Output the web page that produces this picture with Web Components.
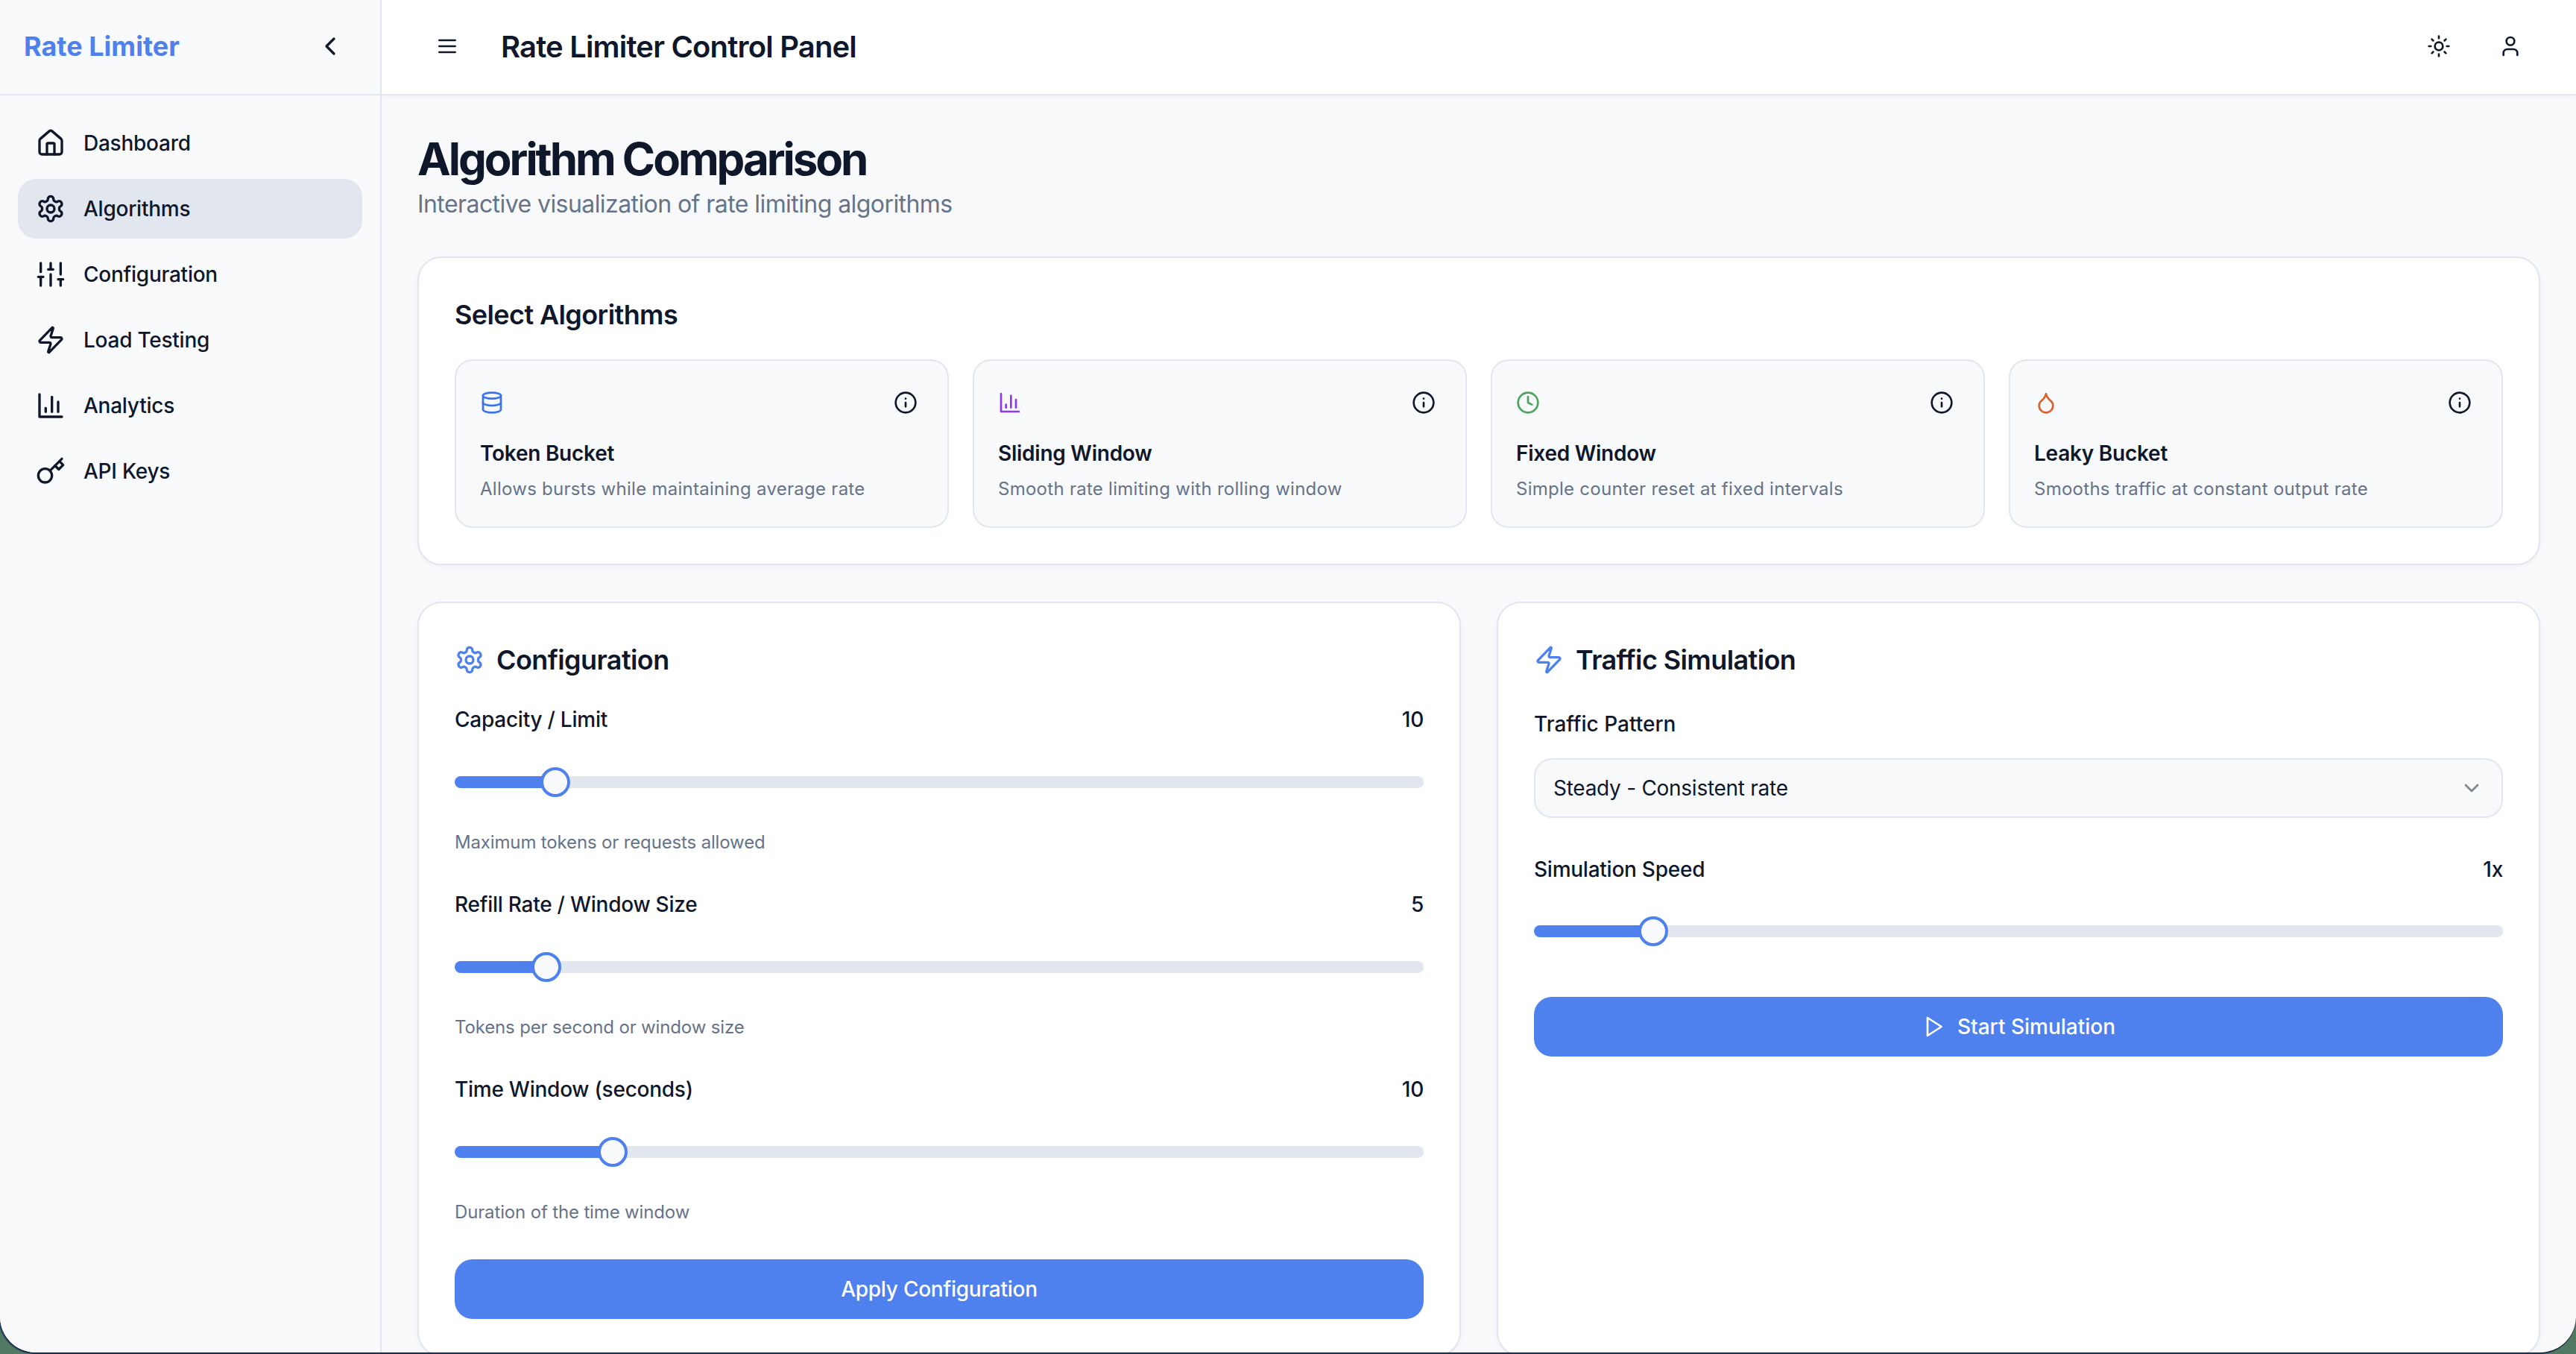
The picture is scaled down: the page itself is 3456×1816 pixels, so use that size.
<!DOCTYPE html>
<html lang="en">
<head>
<meta charset="utf-8">
<title>Rate Limiter Control Panel</title>
<style>
  html, body { margin: 0; height: 100%; background: #527a63; overflow: hidden; }
  body { font-family: Inter, "Noto Sans", sans-serif; color: #0f172a; }
</style>
</head>
<body>
<rl-app>
  <rl-sidebar slot="sidebar" active="Algorithms"></rl-sidebar>
  <rl-topbar slot="topbar" heading="Rate Limiter Control Panel"></rl-topbar>

  <rl-page-title heading="Algorithm Comparison" subtitle="Interactive visualization of rate limiting algorithms"></rl-page-title>

  <rl-card heading="Select Algorithms">
    <rl-algo-grid>
      <rl-algo-card icon="database" tint="#3b74ea" name="Token Bucket" desc="Allows bursts while maintaining average rate"></rl-algo-card>
      <rl-algo-card icon="chart" tint="#9038ec" name="Sliding Window" desc="Smooth rate limiting with rolling window"></rl-algo-card>
      <rl-algo-card icon="clock" tint="#4aa45c" name="Fixed Window" desc="Simple counter reset at fixed intervals"></rl-algo-card>
      <rl-algo-card icon="droplet" tint="#d9622b" name="Leaky Bucket" desc="Smooths traffic at constant output rate"></rl-algo-card>
    </rl-algo-grid>
  </rl-card>

  <rl-columns>
    <rl-card heading="Configuration" icon="settings">
      <rl-slider-field label="Capacity / Limit" value="10" min="1" max="100" shown="10" hint="Maximum tokens or requests allowed"></rl-slider-field>
      <rl-slider-field label="Refill Rate / Window Size" value="5" min="1" max="50" shown="5" hint="Tokens per second or window size"></rl-slider-field>
      <rl-slider-field label="Time Window (seconds)" value="10" min="1" max="60" shown="10" hint="Duration of the time window"></rl-slider-field>
      <rl-button>Apply Configuration</rl-button>
    </rl-card>
    <rl-card heading="Traffic Simulation" icon="zap">
      <rl-select label="Traffic Pattern" value="Steady - Consistent rate"></rl-select>
      <rl-slider-field label="Simulation Speed" value="1" min="0.5" max="5" step="0.5" shown="1x" compact></rl-slider-field>
      <rl-button icon="play">Start Simulation</rl-button>
    </rl-card>
  </rl-columns>
</rl-app>

<script>
const ICONS = {
  home: '<path d="M15 21v-8a1 1 0 0 0-1-1h-4a1 1 0 0 0-1 1v8"/><path d="M3 10a2 2 0 0 1 .709-1.528l7-5.999a2 2 0 0 1 2.582 0l7 5.999A2 2 0 0 1 21 10v9a2 2 0 0 1-2 2H5a2 2 0 0 1-2-2z"/>',
  settings: '<path d="M12.22 2h-.44a2 2 0 0 0-2 2v.18a2 2 0 0 1-1 1.73l-.43.25a2 2 0 0 1-2 0l-.15-.08a2 2 0 0 0-2.73.73l-.22.38a2 2 0 0 0 .73 2.73l.15.1a2 2 0 0 1 1 1.72v.51a2 2 0 0 1-1 1.74l-.15.09a2 2 0 0 0-.73 2.73l.22.38a2 2 0 0 0 2.73.73l.15-.08a2 2 0 0 1 2 0l.43.25a2 2 0 0 1 1 1.73V20a2 2 0 0 0 2 2h.44a2 2 0 0 0 2-2v-.18a2 2 0 0 1 1-1.73l.43-.25a2 2 0 0 1 2 0l.15.08a2 2 0 0 0 2.73-.73l.22-.39a2 2 0 0 0-.73-2.73l-.15-.08a2 2 0 0 1-1-1.74v-.5a2 2 0 0 1 1-1.74l.15-.09a2 2 0 0 0 .73-2.73l-.22-.38a2 2 0 0 0-2.73-.73l-.15.08a2 2 0 0 1-2 0l-.43-.25a2 2 0 0 1-1-1.73V4a2 2 0 0 0-2-2z"/><circle cx="12" cy="12" r="3"/>',
  sliders: '<path d="M4 21v-7M4 10V3M12 21v-9M12 8V3M20 21v-5M20 12V3M2 14h4M10 8h4M18 16h4"/>',
  zap: '<path d="M4 14a1 1 0 0 1-.78-1.63l9.9-10.2a.5.5 0 0 1 .86.46l-1.92 6.02A1 1 0 0 0 13 10h7a1 1 0 0 1 .78 1.63l-9.9 10.2a.5.5 0 0 1-.86-.46l1.92-6.02A1 1 0 0 0 11 14z"/>',
  chart: '<path d="M3 3v18h18"/><path d="M18 17V9"/><path d="M13 17V5"/><path d="M8 17v-3"/>',
  key: '<circle cx="7.5" cy="15.5" r="5.5"/><path d="m21 2-9.6 9.6"/><path d="m15.5 7.5 3 3L22 7l-3-3"/>',
  chevronLeft: '<path d="m15 18-6-6 6-6"/>',
  chevronDown: '<path d="m6 9 6 6 6-6"/>',
  menu: '<path d="M4 6h16M4 12h16M4 18h16"/>',
  sun: '<circle cx="12" cy="12" r="4"/><path d="M12 2v2M12 20v2M4.93 4.93l1.41 1.41M17.66 17.66l1.41 1.41M2 12h2M20 12h2M6.34 17.66l-1.41 1.41M19.07 4.93l-1.41 1.41"/>',
  user: '<path d="M19 21v-2a4 4 0 0 0-4-4H9a4 4 0 0 0-4 4v2"/><circle cx="12" cy="7" r="4"/>',
  info: '<circle cx="12" cy="12" r="10"/><path d="M12 16v-4M12 8h.01"/>',
  database: '<ellipse cx="12" cy="5" rx="9" ry="3"/><path d="M3 5V19A9 3 0 0 0 21 19V5"/><path d="M3 12A9 3 0 0 0 21 12"/>',
  clock: '<circle cx="12" cy="12" r="10"/><path d="M12 6v6l4 2"/>',
  droplet: '<path d="M12 22a7 7 0 0 0 7-7c0-2-1-3.9-3-5.5s-3.5-4-4-6.5c-.5 2.5-2 4.9-4 6.5C6 11.1 5 13 5 15a7 7 0 0 0 7 7z"/>',
  play: '<path d="M6 3l14 9-14 9z"/>'
};

class RlIcon extends HTMLElement {
  connectedCallback() {
    const size = this.getAttribute('size') || 40;
    this.attachShadow({ mode: 'open' }).innerHTML = `
      <style>
        :host { display: inline-flex; flex: none; width: ${size}px; height: ${size}px; }
        svg { display: block; width: 100%; height: 100%; }
      </style>
      <svg viewBox="0 0 24 24" fill="none" stroke="currentColor" stroke-width="2" stroke-linecap="round" stroke-linejoin="round">${ICONS[this.getAttribute('name')]}</svg>
    `;
  }
}

class RlApp extends HTMLElement {
  constructor() {
    super();
    this.attachShadow({ mode: 'open' }).innerHTML = `
      <style>
        :host {
          display: grid;
          grid-template-columns: 512px 1fr;
          height: 1814px;
          overflow: hidden;
          background: #f8f9fb;
          border-radius: 0 0 48px 48px;
          box-shadow: 0 1px 0 0 #10141c, -1px 1px 1px 1px #1c3a66;
        }
        .main { display: flex; flex-direction: column; min-width: 0; min-height: 0; }
        .content { padding: 48px; display: flex; flex-direction: column; overflow: hidden; flex: 1; min-height: 0; }
      </style>
      <slot name="sidebar"></slot>
      <div class="main">
        <slot name="topbar"></slot>
        <div class="content"><slot></slot></div>
      </div>
    `;
  }
}

class RlSidebar extends HTMLElement {
  connectedCallback() {
    const active = this.getAttribute('active');
    const items = [['home', 'Dashboard'], ['settings', 'Algorithms'], ['sliders', 'Configuration'], ['zap', 'Load Testing'], ['chart', 'Analytics'], ['key', 'API Keys']];
    this.attachShadow({ mode: 'open' }).innerHTML = `
      <style>
        :host { display: block; box-sizing: border-box; background: #f9fafc; border-right: 2px solid #e2e6ef; }
        .head {
          box-sizing: border-box;
          height: 128px;
          padding: 0 47px 2px 32px;
          display: flex;
          align-items: center;
          justify-content: space-between;
          border-bottom: 2px solid #e2e6ef;
        }
        .brand { font-size: 36px; font-weight: 700; color: #4f81ee; }
        nav { padding: 24px; display: flex; flex-direction: column; gap: 8px; }
        a {
          height: 80px;
          display: flex;
          align-items: center;
          gap: 24px;
          padding: 0 24px;
          border-radius: 24px;
          font-size: 28px;
          font-weight: 500;
          letter-spacing: -.25px;
          color: #0f172a;
        }
        a.active { background: #e2e6ef; }
      </style>
      <div class="head">
        <span class="brand">Rate Limiter</span>
        <rl-icon name="chevronLeft" size="40"></rl-icon>
      </div>
      <nav>
        ${items.map(([icon, label]) => `<a class="${label === active ? 'active' : ''}"><rl-icon name="${icon}" size="40"></rl-icon>${label}</a>`).join('')}
      </nav>
    `;
  }
}

class RlTopbar extends HTMLElement {
  connectedCallback() {
    this.attachShadow({ mode: 'open' }).innerHTML = `
      <style>
        :host {
          display: flex;
          box-sizing: border-box;
          height: 128px;
          align-items: center;
          padding: 0 72px 2px 72px;
          background: #fff;
          border-bottom: 2px solid #e2e6ef;
          box-shadow: 0 2px 4px rgba(15, 23, 42, .04);
          position: relative;
        }
        h1 { margin: 0 0 0 56px; font-size: 40px; font-weight: 600; letter-spacing: -.83px; flex: 1; }
        .actions { display: flex; gap: 64px; }
      </style>
      <rl-icon name="menu" size="32"></rl-icon>
      <h1>${this.getAttribute('heading')}</h1>
      <div class="actions">
        <rl-icon name="sun" size="32"></rl-icon>
        <rl-icon name="user" size="32"></rl-icon>
      </div>
    `;
  }
}

class RlPageTitle extends HTMLElement {
  connectedCallback() {
    this.attachShadow({ mode: 'open' }).innerHTML = `
      <style>
        :host { display: block; margin-bottom: 46px; }
        h2 { margin: 0; font-size: 60px; line-height: 74px; font-weight: 700; letter-spacing: -3.05px; color: #0f172a; }
        p { margin: 0; font-size: 32px; line-height: 48px; letter-spacing: -.57px; color: #667388; }
      </style>
      <h2>${this.getAttribute('heading')}</h2>
      <p>${this.getAttribute('subtitle')}</p>
    `;
  }
}

class RlCard extends HTMLElement {
  connectedCallback() {
    const icon = this.getAttribute('icon');
    this.attachShadow({ mode: 'open' }).innerHTML = `
      <style>
        :host {
          display: block;
          box-sizing: border-box;
          flex: none;
          padding: 48px;
          background: #fff;
          border: 2px solid #e2e6ef;
          border-radius: 32px;
          box-shadow: 0 2px 4px rgba(15, 23, 42, .04);
        }
        h3 {
          display: flex;
          align-items: center;
          gap: 16px;
          margin: 0 0 32px;
          font-size: 36px;
          line-height: 56px;
          font-weight: 600;
          letter-spacing: -.6px;
        }
        rl-icon { color: #4f81ee; }
      </style>
      <h3>${icon ? `<rl-icon name="${icon}" size="40"></rl-icon>` : ''}${this.getAttribute('heading')}</h3>
      <slot></slot>
    `;
  }
}

class RlAlgoGrid extends HTMLElement {
  constructor() {
    super();
    this.attachShadow({ mode: 'open' }).innerHTML = `
      <style>:host { display: grid; grid-template-columns: repeat(4, 1fr); gap: 32px; }</style>
      <slot></slot>
    `;
  }
}

class RlAlgoCard extends HTMLElement {
  connectedCallback() {
    this.attachShadow({ mode: 'open' }).innerHTML = `
      <style>
        :host {
          display: block;
          box-sizing: border-box;
          height: 226px;
          padding: 40px 40px 0 32px;
          background: #f8f9fb;
          border: 2px solid #e2e6ef;
          border-radius: 24px;
        }
        .top { display: flex; justify-content: space-between; height: 32px; }
        .top rl-icon:last-child { color: #0f172a; }
        .name { margin-top: 32px; font-size: 28px; line-height: 40px; font-weight: 600; letter-spacing: -.25px; }
        .desc { margin-top: 12px; font-size: 24px; line-height: 32px; letter-spacing: .27px; color: #667388; white-space: nowrap; }
      </style>
      <div class="top">
        <rl-icon name="${this.getAttribute('icon')}" size="32" style="color:${this.getAttribute('tint')}"></rl-icon>
        <rl-icon name="info" size="32"></rl-icon>
      </div>
      <div class="name">${this.getAttribute('name')}</div>
      <div class="desc">${this.getAttribute('desc')}</div>
    `;
  }
}

class RlSliderField extends HTMLElement {
  connectedCallback() {
    const min = +this.getAttribute('min');
    const max = +this.getAttribute('max');
    const value = +this.getAttribute('value');
    const hint = this.getAttribute('hint');
    const compact = this.hasAttribute('compact');
    this.attachShadow({ mode: 'open' }).innerHTML = `
      <style>
        :host { display: block; font-size: 28px; font-weight: 500; letter-spacing: -.25px; margin-bottom: ${compact ? 68 : 47}px; }
        .row { display: flex; justify-content: space-between; line-height: 40px; margin-bottom: ${compact ? 43 : 44}px; }
        input {
          -webkit-appearance: none;
          appearance: none;
          display: block;
          width: 100%;
          height: 40px;
          margin: 0;
          background: transparent;
        }
        input::-webkit-slider-runnable-track {
          height: 16px;
          border-radius: 8px;
          background: linear-gradient(#4f81ee, #4f81ee) no-repeat left / calc(20px + (100% - 40px) * var(--t)) 100%, #e2e6ef;
        }
        input::-webkit-slider-thumb {
          -webkit-appearance: none;
          box-sizing: border-box;
          width: 40px;
          height: 40px;
          margin-top: -12px;
          border-radius: 50%;
          background: #f8f9fb;
          border: 4px solid #4f81ee;
        }
        .hint { margin-top: 45px; font-size: 24px; line-height: 32px; font-weight: 400; letter-spacing: -.15px; color: #667388; }
      </style>
      <div class="row"><span>${this.getAttribute('label')}</span><span>${this.getAttribute('shown')}</span></div>
      <input type="range" min="${min}" max="${max}" step="${this.getAttribute('step') || 1}" value="${value}" style="--t:${(value - min) / (max - min)}">
      ${hint ? `<div class="hint">${hint}</div>` : ''}
    `;
  }
}

class RlSelect extends HTMLElement {
  connectedCallback() {
    this.attachShadow({ mode: 'open' }).innerHTML = `
      <style>
        :host { display: block; margin: 38px 0 49px; font-size: 28px; letter-spacing: -.27px; }
        label { display: block; font-weight: 500; line-height: 40px; margin-bottom: 26px; letter-spacing: 0; }
        .box {
          box-sizing: border-box;
          height: 80px;
          padding: 0 24px;
          display: flex;
          align-items: center;
          justify-content: space-between;
          background: #f8f9fb;
          border: 2px solid #e2e6ef;
          border-radius: 24px;
        }
        rl-icon { color: #808690; }
      </style>
      <label>${this.getAttribute('label')}</label>
      <div class="box"><span>${this.getAttribute('value')}</span><rl-icon name="chevronDown" size="32"></rl-icon></div>
    `;
  }
}

class RlButton extends HTMLElement {
  connectedCallback() {
    const icon = this.getAttribute('icon');
    this.attachShadow({ mode: 'open' }).innerHTML = `
      <style>
        :host {
          display: flex;
          align-items: center;
          justify-content: center;
          gap: 16px;
          height: 80px;
          border-radius: 24px;
          background: #4f81ee;
          color: #fff;
          font-size: 28px;
          font-weight: 500;
          letter-spacing: ${icon ? 0 : -.25}px;
        }
      </style>
      ${icon ? `<rl-icon name="${icon}" size="32"></rl-icon>` : ''}<slot></slot>
    `;
  }
}

class RlColumns extends HTMLElement {
  constructor() {
    super();
    this.attachShadow({ mode: 'open' }).innerHTML = `
      <style>:host { display: grid; grid-template-columns: 1fr 1fr; gap: 48px; margin-top: 49px; height: 1012px; flex: none; }</style>
      <slot></slot>
    `;
  }
}

customElements.define('rl-icon', RlIcon);
customElements.define('rl-app', RlApp);
customElements.define('rl-sidebar', RlSidebar);
customElements.define('rl-topbar', RlTopbar);
customElements.define('rl-page-title', RlPageTitle);
customElements.define('rl-card', RlCard);
customElements.define('rl-algo-grid', RlAlgoGrid);
customElements.define('rl-algo-card', RlAlgoCard);
customElements.define('rl-slider-field', RlSliderField);
customElements.define('rl-select', RlSelect);
customElements.define('rl-button', RlButton);
customElements.define('rl-columns', RlColumns);
</script>
</body>
</html>
